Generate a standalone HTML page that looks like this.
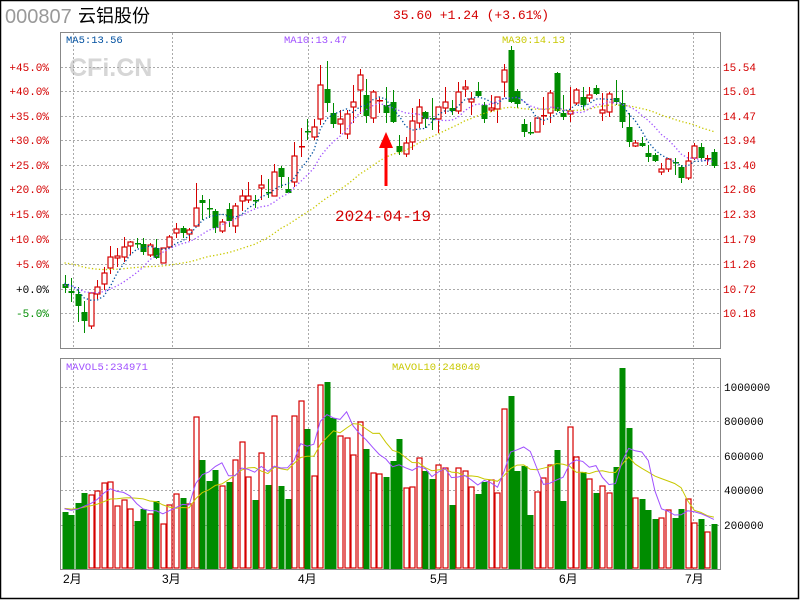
<!DOCTYPE html>
<html><head><meta charset="utf-8"><style>
html,body{margin:0;padding:0;background:#fff;}
#wrap{position:relative;width:800px;height:600px;overflow:hidden;background:#fff;}
svg{position:absolute;left:0;top:0;}
</style></head><body><div id="wrap">
<svg id="s" width="800" height="600" xmlns="http://www.w3.org/2000/svg">
<rect x="0.5" y="0.5" width="798" height="598" fill="none" stroke="#000" stroke-width="1.5"/>
<text x="5" y="23" font-family="Liberation Sans, sans-serif" font-size="20" fill="#999">000807</text>
<text x="78" y="22" font-family="Liberation Sans, 'Noto Sans CJK SC', sans-serif" font-size="18" fill="#000">云铝股份</text>
<text x="393" y="19" font-family="Liberation Mono, monospace" font-size="13" fill="#d40000">35.60 +1.24 (+3.61%)</text>
<text x="69" y="76" font-family="Liberation Sans, sans-serif" font-size="25" font-weight="bold" fill="#d6d6d6">CFi.CN</text>
<g id="g"></g>
<text x="66" y="43" font-family="Liberation Mono, monospace" font-size="10.5" fill="#0050a0">MA5:13.56</text>
<text x="284" y="43" font-family="Liberation Mono, monospace" font-size="10.5" fill="#a050ff">MA10:13.47</text>
<text x="502" y="43" font-family="Liberation Mono, monospace" font-size="10.5" fill="#c8c800">MA30:14.13</text>
<text x="66" y="370" font-family="Liberation Mono, monospace" font-size="10.5" fill="#a050ff">MAVOL5:234971</text>
<text x="392" y="370" font-family="Liberation Mono, monospace" font-size="10.5" fill="#c8c800">MAVOL10:248040</text>
<text x="335" y="221" font-family="Liberation Mono, monospace" font-size="16" fill="#d40000">2024-04-19</text>
<line x1="386" y1="186" x2="386" y2="145" stroke="#f00" stroke-width="3"/>
<polygon points="386,132 379,148 393,148" fill="#f00"/>
</svg>
<script>
var g=document.getElementById('g');var h='';
function el(s){h+=s;}
el('<rect x="60.5" y="32.5" width="660" height="316" fill="none" stroke="#888"/>');
el('<rect x="60.5" y="358.5" width="660" height="211" fill="none" stroke="#888"/>');
var vx=[73,172,308,439,570,693];
vx.forEach(function(x){el('<line x1="'+(x+.5)+'" y1="33" x2="'+(x+.5)+'" y2="348" stroke="#aaa" stroke-dasharray="2,2"/>');el('<line x1="'+(x+.5)+'" y1="359" x2="'+(x+.5)+'" y2="569" stroke="#aaa" stroke-dasharray="2,2"/>');});
var py=[67,91,116,140,165,189,214,239,264,289,313];
var pl=['+45.0%','+40.0%','+35.0%','+30.0%','+25.0%','+20.0%','+15.0%','+10.0%','+5.0%','+0.0%','-5.0%'];
var pr=['15.54','15.01','14.47','13.94','13.40','12.86','12.33','11.79','11.26','10.72','10.18'];
py.forEach(function(y,i){el('<line x1="61" y1="'+(y+.5)+'" x2="720" y2="'+(y+.5)+'" stroke="#aaa" stroke-dasharray="2,2"/>');
var c=i<9?'#d40000':(i==9?'#000':'#008c00');
el('<text x="49" y="'+(y+4)+'" text-anchor="end" font-family="Liberation Mono, monospace" font-size="11" fill="'+c+'">'+pl[i]+'</text>');
el('<text x="723" y="'+(y+4)+'" font-family="Liberation Mono, monospace" font-size="11" fill="#d40000">'+pr[i]+'</text>');});
var vy=[387,421,456,490,525],vl=['1000000','800000','600000','400000','200000'];
vy.forEach(function(y,i){el('<line x1="61" y1="'+(y+.5)+'" x2="720" y2="'+(y+.5)+'" stroke="#aaa" stroke-dasharray="2,2"/>');
el('<text x="724" y="'+(y+4)+'" font-family="Liberation Mono, monospace" font-size="11" fill="#000">'+vl[i]+'</text>');});
var ml=[[63,'2月'],[162,'3月'],[298,'4月'],[430,'5月'],[559,'6月'],[685,'7月']];
ml.forEach(function(m){el('<text x="'+m[0]+'" y="583" font-family="Liberation Sans, \'Noto Sans CJK SC\', sans-serif" font-size="12" fill="#000">'+m[1]+'</text>');});
var D=[[284,288,275,293],[291,293,278,302],[294,306,287,322],[312,321,301,333],[293,326,292,329],[287,294,280,299],[273,284,267,290],[257,268,246,274],[256,258,248,267],[247,257,237,262],
[242,246,241,255],[243,244,238,248],[244,252,238,255],[245,255,243,257],[248,258,239,259],[248,263,248,263],[237,247,235,248],[229,233,223,238],[228,233,226,238],[230,234,228,241],
[208,226,183,226],[200,203,195,220],[208,209,199,218],[211,228,209,233],[222,231,219,233],[209,221,203,227],[206,226,203,233],[196,201,190,211],[196,200,182,203],[200,201,195,208],
[185,188,175,200],[192,193,179,198],[172,196,164,196],[168,177,166,188],[189,193,177,193],[156,182,142,187],[146,147,128,157],[131,132,119,140],[127,137,119,140],[85,119,65,125],
[89,103,61,112],[113,124,103,128],[119,124,110,134],[114,134,110,139],[102,107,85,123],[75,90,69,114],[95,116,79,123],[92,118,90,123],[100,101,97,113],[105,113,87,123],
[102,122,90,123],[146,152,135,155],[143,154,137,157],[121,142,108,150],[107,123,99,128],[112,119,111,128],[118,119,98,130],[107,119,107,133],[102,108,87,114],[108,111,100,115],
[92,111,82,114],[87,89,80,97],[99,102,92,115],[91,96,82,97],[105,119,102,123],[108,110,95,112],[97,109,97,123],[70,82,64,97],[50,102,46,103],[91,104,89,108],
[124,132,119,137],[132,133,122,135],[118,132,118,132],[115,116,97,125],[93,113,90,123],[73,111,72,112],[113,117,95,120],[111,114,87,122],[90,103,88,105],[97,105,87,110],
[95,98,87,102],[88,94,85,95],[110,113,93,121],[94,112,92,117],[98,102,80,105],[103,122,90,128],[127,142,113,147],[143,146,140,147],[143,146,137,147],[153,157,145,162],
[155,161,153,162],[169,172,163,175],[159,169,158,172],[162,163,158,175],[167,178,165,183],[161,178,152,180],[146,158,143,160],[147,158,143,160],[158,159,155,165],[152,166,149,168]];
var V=[512,515,503,493,495,491,483,482,506,500,509,521,509,514,501,524,505,494,498,504,
417,460,481,470,486,482,460,442,477,500,453,485,416,486,499,416,401,429,476,385,
382,418,436,438,455,422,449,473,474,477,461,439,488,487,458,471,479,465,468,505,
468,471,487,494,482,480,493,409,396,471,466,515,492,478,465,450,501,427,457,472,
479,493,486,493,467,368,428,498,499,510,519,518,510,518,509,499,523,519,532,524];
var C='GGGGRRRRRR'+'RGGRGRRRGR'+'RGGGRGRRRG'+'RGRGGRRGRR'+'GGRRRRGRRG'+'GGRRRGGRRG'+'RRRGGRRRGG'+'GGRRRGGRRG'+'RGRRGGGRGG'+'GRRGGRRGRG';
var RED='#d40000',GRN='#008c00';
var closes=[],vols=[];
function X(i){return 64.5+i*6.56;}
for(var i=0;i<100;i++){var d=D[i],c=C[i],x=Math.round(X(i)),col=c=='R'?RED:GRN;
closes.push(c=='R'?d[0]:d[1]);vols.push(568-V[i]);
el('<line x1="'+(x+.5)+'" y1="'+d[2]+'" x2="'+(x+.5)+'" y2="'+d[3]+'" stroke="'+col+'" stroke-width="1"/>');
var bh=d[1]-d[0];
if(bh<=1){el('<rect x="'+(x-2)+'" y="'+d[0]+'" width="6" height="1.5" fill="'+col+'"/>');}
else if(c=='R'){el('<rect x="'+(x-2)+'" y="'+d[0]+'" width="5" height="'+bh+'" fill="#fff" stroke="'+col+'" stroke-width="1.2"/>');}
else{el('<rect x="'+(x-2.5)+'" y="'+d[0]+'" width="6" height="'+bh+'" fill="'+col+'"/>');}
if(c=='R')el('<rect x="'+(x-2)+'" y="'+V[i]+'" width="5" height="'+(568-V[i])+'" fill="#fff" stroke="'+RED+'" stroke-width="1.2"/>');
else el('<rect x="'+(x-2.5)+'" y="'+V[i]+'" width="6" height="'+(569-V[i])+'" fill="'+GRN+'"/>');}
function ma(arr,n,pad){var out=[];for(var i=0;i<arr.length;i++){var s=0;for(var k=0;k<n;k++){var j=i-k;s+=j>=0?arr[j]:pad;}out.push(s/n);}return out;}
function path(vals,start){var p='';for(var i=start;i<vals.length;i++){p+=(i==start?'M':'L')+X(i).toFixed(1)+','+vals[i].toFixed(1);}return p;}
var m5=ma(closes,5,282),m10=ma(closes,10,285),m30=ma(closes,30,262);
el('<path d="'+path(m30,0)+'" fill="none" stroke="#c8c800" stroke-width="1.3" stroke-dasharray="1.3,2.2"/>');
el('<path d="'+path(m10,0)+'" fill="none" stroke="#a050ff" stroke-width="1.3" stroke-dasharray="1.3,2.2"/>');
el('<path d="'+path(m5,0)+'" fill="none" stroke="#0050a0" stroke-width="1.3" stroke-dasharray="1.3,2.2"/>');
var v5=ma(vols,5,60),v10=ma(vols,10,60);
function vp(a){return a.map(function(v){return 568-v;});}
el('<path d="'+path(vp(v10),0)+'" fill="none" stroke="#c8c800" stroke-width="1"/>');
el('<path d="'+path(vp(v5),0)+'" fill="none" stroke="#a050ff" stroke-width="1"/>');
g.innerHTML=h;
</script>
</div></body></html>
